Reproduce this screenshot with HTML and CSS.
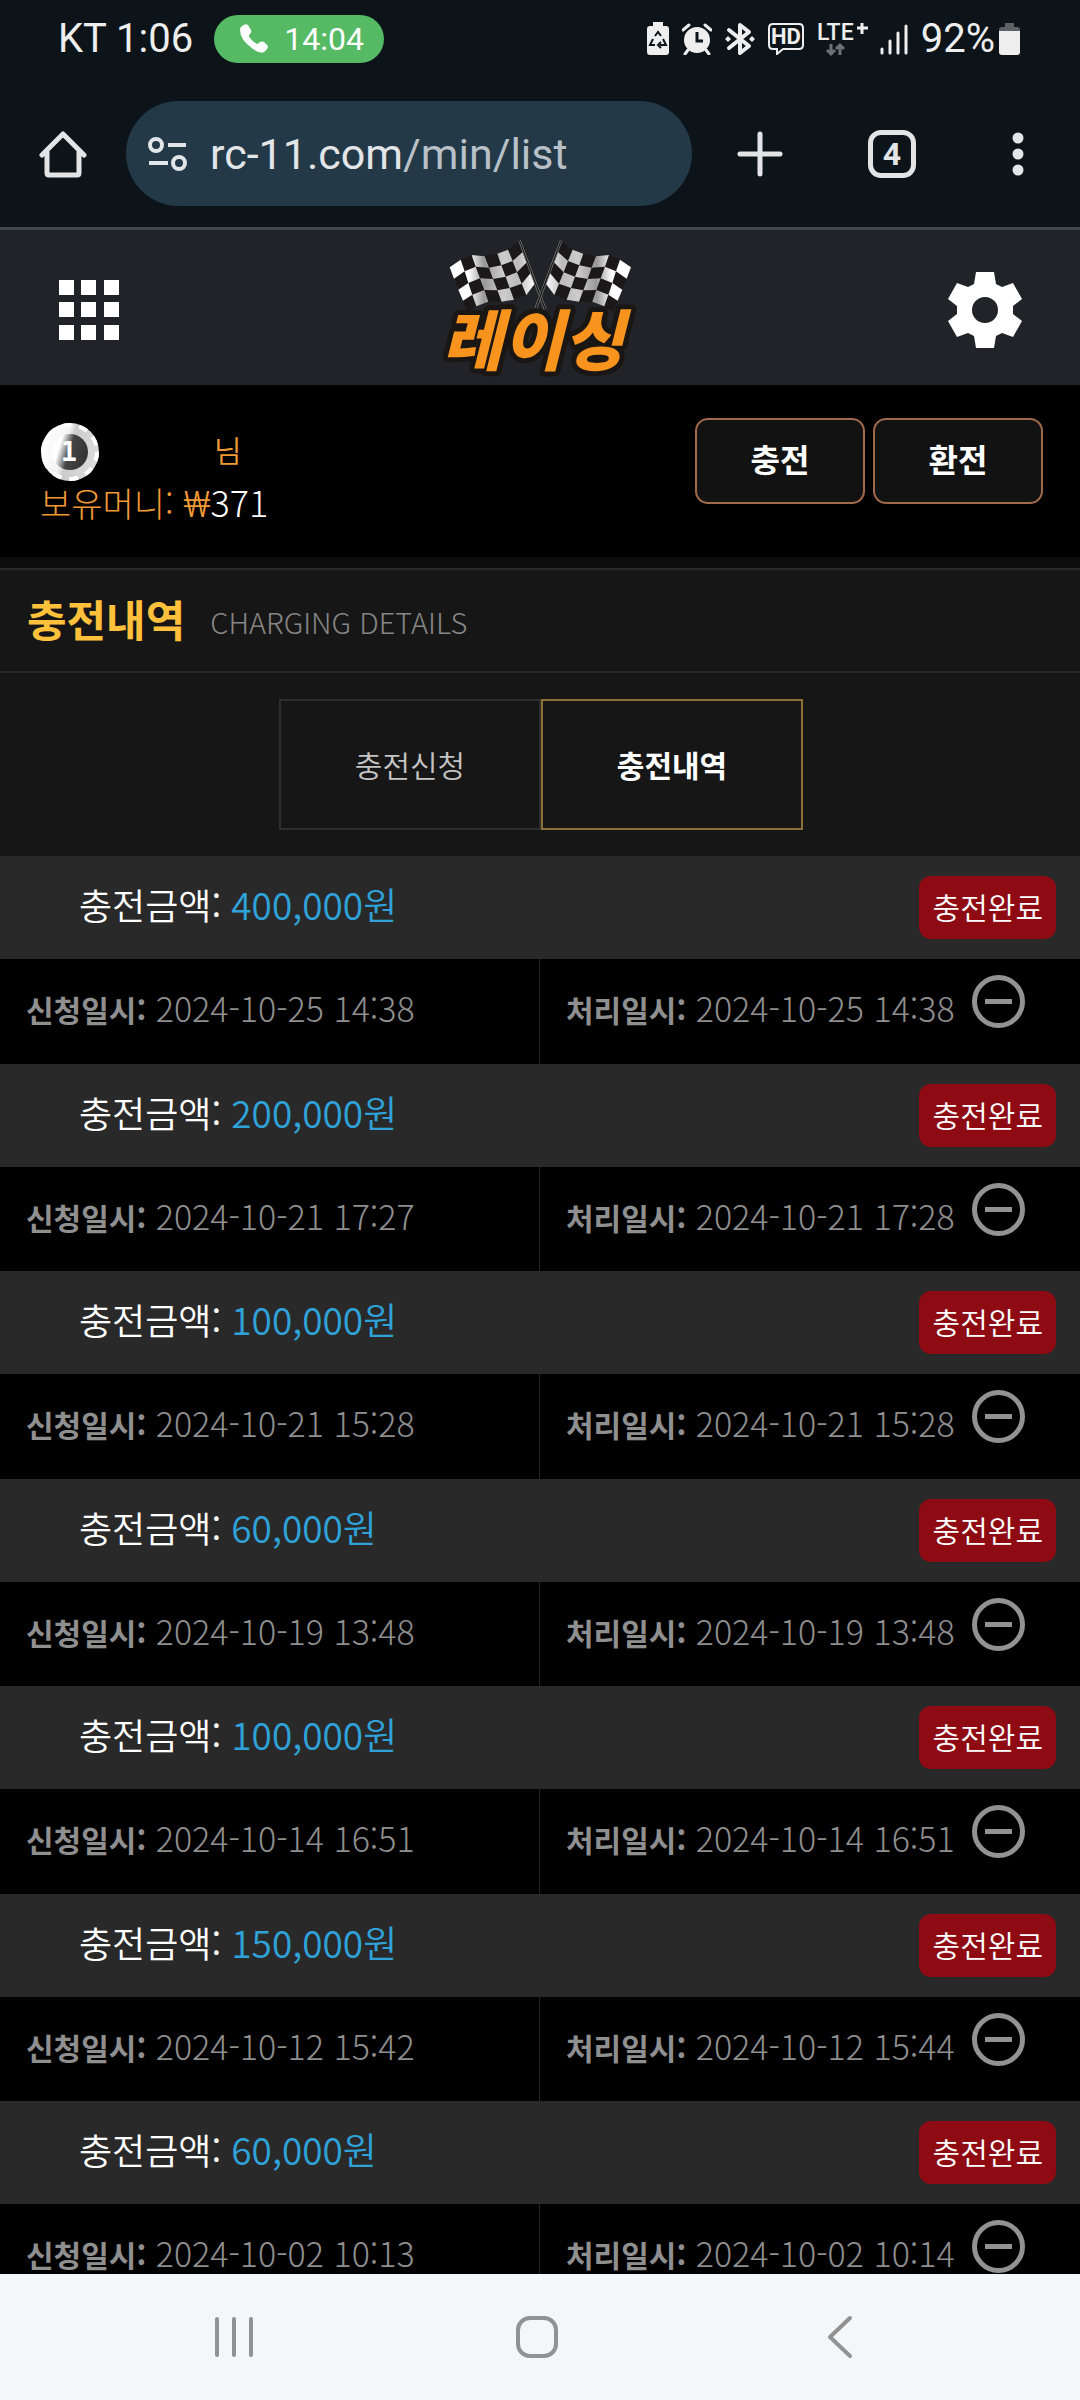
FILE: index.html
```html
<!DOCTYPE html>
<html lang="ko">
<head>
<meta charset="utf-8">
<meta name="viewport" content="width=device-width, initial-scale=1">
<title>충전내역</title>
<link rel="stylesheet" href="styles.css">
</head>
<body>
<div class="screen">
  <div class="status">
    <span class="status-clock">KT 1:06</span>
    <span class="call">
      <svg width="28" height="29" viewBox="0 0 28 29" fill="#fff"><path d="M1 3 Q5 -1 8 1 L11 6 Q12 8 10 10 Q8 12 10 14 Q13 18 17 20 Q18 20 20 18 Q22 17 24 18 L28 22 Q28 25 24 28 Q20 30 13 25 Q0 16 0 6 Q0 4 1 3Z"/></svg>
      14:04
    </span>
    <div class="status-icons">
      <svg width="22" height="34" viewBox="0 0 22 34"><path d="M6 0h10v4h3q3 0 3 3v23q0 3-3 3H3q-3 0-3-3V7q0-3 3-3h3z" fill="#eee"/><g fill="none" stroke="#0c141a" stroke-width="2"><path d="M8 14l3-4 3 4M6 17l-3 6h5M16 17l3 6h-6M14 20l-3 3 3 3"/></g></svg>
      <svg width="30" height="32" viewBox="0 0 30 32"><circle cx="15" cy="17" r="13" fill="#eee"/><path d="M1 7l6-5M29 7l-6-5M6 27l-3 4M24 27l3 4" stroke="#eee" stroke-width="3" stroke-linecap="round"/><path d="M15 9v9h6" fill="none" stroke="#0c141a" stroke-width="3"/></svg>
      <svg width="30" height="34" viewBox="0 0 30 34"><path d="M4 8l20 16-9 7V3l9 7L4 26" fill="none" stroke="#eee" stroke-width="4" stroke-linejoin="round" stroke-linecap="round"/><path d="M0 17l3-3 3 3-3 3zM24 17l3-3 3 3-3 3z" fill="#eee"/></svg>
      <svg width="36" height="32" viewBox="0 0 36 32"><path d="M5 1h26q4 0 4 4v17q0 4-4 4H15l-6 5v-5H5q-4 0-4-4V5q0-4 4-4z" fill="none" stroke="#eee" stroke-width="2"/><text x="18" y="21" text-anchor="middle" class="hd">HD</text></svg>
      <svg class="network" width="50" height="34" viewBox="0 0 50 34"><text x="0" y="18" class="lte">LTE</text><path d="M45 1v11M40 6h11" stroke="#eee" stroke-width="3"/><path d="M14 22v10M10 28l4 4 4-4M23 33V23M19 27l4-4 4 4" fill="none" stroke="#6d7175" stroke-width="3"/></svg>
      <svg width="28" height="32" viewBox="0 0 28 32"><path d="M2 26v4M10 18v12M18 10v20M26 3v27" stroke="#eee" stroke-width="3" stroke-linecap="round"/></svg>
      <span class="battery"><span>92%</span>
      <svg width="21" height="34" viewBox="0 0 21 34"><path d="M6 1h9v4h3q3 0 3 3v2H0V8q0-3 3-3h3z" fill="#5d6064"/><path d="M0 9h21v21q0 3-3 3H3q-3 0-3-3z" fill="#eee"/></svg></span>
    </div>
  </div>

  <div class="browser">
    <button class="tool" aria-label="홈"><svg width="48" height="48" viewBox="0 0 48 48"><path d="M3 25L24 4l21 21M8 22v21q0 2 2 2h28q2 0 2-2V22" fill="none" stroke="#e3e4e6" stroke-width="5" stroke-linecap="round" stroke-linejoin="round"/></svg></button>
    <button class="address">
      <svg width="40" height="34" viewBox="0 0 40 34"><g fill="none" stroke="#e3e6e9" stroke-width="4"><circle cx="8" cy="8" r="6"/><circle cx="31" cy="26" r="6"/><path d="M20 8h18M1 26h19"/></g></svg>
      <span class="url">rc-11.com<span class="url-path">/min/list</span></span>
    </button>
    <div class="tools">
      <button class="tool" aria-label="새 탭"><svg width="48" height="48" viewBox="0 0 48 48"><path d="M24 4v40M4 24h40" stroke="#e3e4e6" stroke-width="5" stroke-linecap="round"/></svg></button>
      <button class="tool" aria-label="탭 4개"><span class="tab-count">4</span></button>
      <button class="tool tool-menu" aria-label="메뉴"><svg width="12" height="48" viewBox="0 0 12 48" fill="#e3e4e6"><circle cx="6" cy="8" r="5.5"/><circle cx="6" cy="24" r="5.5"/><circle cx="6" cy="40" r="5.5"/></svg></button>
    </div>
  </div>

  <main class="page">
    <header class="site-head">
      <button class="tool" aria-label="전체 메뉴"><svg width="60" height="60" viewBox="0 0 60 60" fill="#fff"><path d="M0 0h15v15H0zM22 0h15v15H22zM45 0h15v15H45zM0 22h15v15H0zM22 22h15v15H22zM45 22h15v15H45zM0 45h15v15H0zM22 45h15v15H22zM45 45h15v15H45z"/></svg></button>
      <a href="#" class="logo" aria-label="레이싱">
        <svg class="logo-art" width="188" height="140" viewBox="0 0 188 140">
          <defs>
            <linearGradient id="cloth" gradientUnits="userSpaceOnUse" x1="152" y1="160" x2="409" y2="160">
              <stop offset="0" stop-color="#fff"/><stop offset=".22" stop-color="#fff"/><stop offset=".4" stop-color="#999"/><stop offset=".62" stop-color="#ccc"/><stop offset=".8" stop-color="#bbb"/><stop offset="1" stop-color="#fff"/>
            </linearGradient>
            <g id="flag">
              <path d="M152 143L185 120 218 106 257 110 295 102 327 90 360 64 409 190 382 226 345 240 308 246 268 246 232 260 205 277Z" fill="#1b1819"/>
              <path fill="url(#cloth)" d="M152 143L185 120 197 155 165 177ZM178 210L208 190 220 225 192 243ZM197 155L230 141 243 176 208 190ZM220 225L256 211 268 246 232 260ZM218 106L257 110 270 144 230 141ZM243 176L282 178 295 212 256 211ZM270 144L307 137 320 171 282 178ZM295 212L332 205 345 240 308 246ZM295 102L327 90 341 124 307 137ZM320 171L354 158 368 192 332 205ZM341 124L372 96 384 127 354 158ZM368 192L397 158 409 190 382 226Z"/>
              <path d="M362 62L440 270" stroke="#111" stroke-width="9"/>
              <path d="M359 63L436 271M364 61L442 269" stroke="#999" stroke-width="2"/>
            </g>
          </defs>
          <g transform="scale(.3333) translate(-144 -55)">
            <use href="#flag"/>
            <use href="#flag" transform="translate(848 0) scale(-1 1)"/>
          </g>
          <text x="86" y="127" text-anchor="middle" class="logo-text">레이싱</text>
        </svg>
      </a>
      <button class="tool" aria-label="설정"><svg width="76" height="76" viewBox="0 0 76 76"><path fill="#fff" fill-rule="evenodd" d="M29 0H47L49 12 55 15 66 11 75 27 66 34V42L75 49 66 65 55 61 49 64 47 76H29L27 64 21 61 10 65 1 49 10 42V34L1 27 10 11 21 15 27 12ZM38 25A13 13 0 1 0 38 51 13 13 0 1 0 38 25Z"/></svg></button>
    </header>

    <section class="account">
      <div>
        <div class="user">
          <svg width="60" height="60" viewBox="0 0 60 60">
            <defs><linearGradient id="face" x1="0" y1=".3" x2="1" y2=".6"><stop offset="0" stop-color="#fff"/><stop offset=".4" stop-color="#f4f4f4"/><stop offset=".5" stop-color="#ccc"/><stop offset="1" stop-color="#ddd"/></linearGradient>
            <linearGradient id="core" x1="0" y1=".3" x2="1" y2=".6"><stop offset=".2" stop-color="#fff"/><stop offset=".5" stop-color="#444"/><stop offset="1" stop-color="#333"/></linearGradient></defs>
            <circle cx="30" cy="30" r="29" fill="url(#face)"/><circle cx="30" cy="30" r="27" fill="none" stroke="#fff" stroke-width="4" stroke-dasharray="9 8"/>
            <circle cx="30" cy="30" r="18" fill="url(#core)"/><text x="29" y="39" text-anchor="middle" class="coin-num">1</text>
          </svg>
          <span>님</span>
        </div>
        <p class="money">보유머니: <span class="won">₩</span><span class="money-value">371</span></p>
      </div>
      <div class="account-actions">
        <button class="action">충전</button>
        <button class="action">환전</button>
      </div>
    </section>

    <div class="title">
      <h1>충전내역</h1>
      <span class="title-sub">CHARGING DETAILS</span>
    </div>

    <nav class="tabs">
      <a href="#" class="tab">충전신청</a>
      <a href="#" class="tab tab-on" aria-current="page">충전내역</a>
    </nav>

    <ul class="records">
      <li class="record">
        <div class="record-head"><p>충전금액: <span class="amount">400,000원</span></p><span class="badge">충전완료</span></div>
        <div class="record-body"><p><b>신청일시:</b> 2024-10-25 14:38</p><p><b>처리일시:</b> 2024-10-25 14:38</p><button class="remove" aria-label="삭제"></button></div>
      </li>
      <li class="record">
        <div class="record-head"><p>충전금액: <span class="amount">200,000원</span></p><span class="badge">충전완료</span></div>
        <div class="record-body"><p><b>신청일시:</b> 2024-10-21 17:27</p><p><b>처리일시:</b> 2024-10-21 17:28</p><button class="remove" aria-label="삭제"></button></div>
      </li>
      <li class="record">
        <div class="record-head"><p>충전금액: <span class="amount">100,000원</span></p><span class="badge">충전완료</span></div>
        <div class="record-body"><p><b>신청일시:</b> 2024-10-21 15:28</p><p><b>처리일시:</b> 2024-10-21 15:28</p><button class="remove" aria-label="삭제"></button></div>
      </li>
      <li class="record">
        <div class="record-head"><p>충전금액: <span class="amount">60,000원</span></p><span class="badge">충전완료</span></div>
        <div class="record-body"><p><b>신청일시:</b> 2024-10-19 13:48</p><p><b>처리일시:</b> 2024-10-19 13:48</p><button class="remove" aria-label="삭제"></button></div>
      </li>
      <li class="record">
        <div class="record-head"><p>충전금액: <span class="amount">100,000원</span></p><span class="badge">충전완료</span></div>
        <div class="record-body"><p><b>신청일시:</b> 2024-10-14 16:51</p><p><b>처리일시:</b> 2024-10-14 16:51</p><button class="remove" aria-label="삭제"></button></div>
      </li>
      <li class="record">
        <div class="record-head"><p>충전금액: <span class="amount">150,000원</span></p><span class="badge">충전완료</span></div>
        <div class="record-body"><p><b>신청일시:</b> 2024-10-12 15:42</p><p><b>처리일시:</b> 2024-10-12 15:44</p><button class="remove" aria-label="삭제"></button></div>
      </li>
      <li class="record">
        <div class="record-head"><p>충전금액: <span class="amount">60,000원</span></p><span class="badge">충전완료</span></div>
        <div class="record-body"><p><b>신청일시:</b> 2024-10-02 10:13</p><p><b>처리일시:</b> 2024-10-02 10:14</p><button class="remove" aria-label="삭제"></button></div>
      </li>
    </ul>
  </main>

  <nav class="system-nav">
    <button class="tool" aria-label="최근 앱"><svg width="44" height="44" viewBox="0 0 44 44"><path d="M5 4v36M22 4v36M39 4v36" stroke="#929292" stroke-width="4" stroke-linecap="round"/></svg></button>
    <button class="tool" aria-label="홈 화면"><svg width="44" height="44" viewBox="0 0 44 44"><rect x="3" y="3" width="38" height="38" rx="12" fill="none" stroke="#929292" stroke-width="4"/></svg></button>
    <button class="tool" aria-label="뒤로"><svg width="44" height="44" viewBox="0 0 44 44"><path d="M32 3L12 22l20 19" fill="none" stroke="#929292" stroke-width="4" stroke-linecap="round" stroke-linejoin="round"/></svg></button>
  </nav>
</div>
</body>
</html>
```
FILE: styles.css
```css
* { box-sizing: border-box; }

body {
  margin: 0;
  background: #000;
  color: #fff;
  font-family: "Noto Sans CJK KR", "Noto Sans", sans-serif;
}

p, h1, ul { margin: 0; padding: 0; }
ul { list-style: none; }
a { color: inherit; text-decoration: none; }
svg { display: block; flex: none; }

button {
  margin: 0;
  padding: 0;
  border: 0;
  background: none;
  color: inherit;
  font: inherit;
}

.screen {
  display: flex;
  flex-direction: column;
  height: 100vh;
  overflow: hidden;
}

/* phone status bar */
.status {
  display: flex;
  align-items: center;
  flex: none;
  height: 77px;
  padding: 0 60px 0 58px;
  background: #0c141a;
  color: #eee;
  font-family: Roboto, sans-serif;
  font-size: 40px;
  line-height: 48px;
}
.call {
  display: flex;
  align-items: center;
  gap: 16px;
  height: 48px;
  margin-left: 21px;
  padding: 0 20px 0 26px;
  border-radius: 24px;
  background: #56ba65;
  color: #fff;
  font-size: 32px;
}
.status-icons {
  display: flex;
  align-items: center;
  gap: 13px;
  margin-left: auto;
}
.network { overflow: visible; }
.battery { display: flex; align-items: center; gap: 4px; }
.hd { font: 700 22px Roboto, sans-serif; fill: #eee; }
.lte { font: 500 23px Roboto, sans-serif; fill: #eee; }

/* browser toolbar */
.browser {
  display: flex;
  align-items: center;
  flex: none;
  height: 153px;
  padding: 3px 56px 0 39px;
  border-bottom: 3px solid #41484e;
  background: #0c141a;
}
.tool { display: grid; place-items: center; flex: none; }
.address {
  display: flex;
  align-items: center;
  flex: 1;
  gap: 22px;
  height: 105px;
  margin-left: 39px;
  padding-left: 22px;
  border-radius: 53px;
  background: #233947;
  color: #e3e6e9;
}
.url { font-family: Roboto, sans-serif; font-size: 43px; line-height: 56px; }
.url-path { color: #b9c1c8; }
.tools { display: flex; gap: 84px; margin-left: 44px; }
.tab-count {
  width: 48px;
  height: 48px;
  border: 5px solid #e3e4e6;
  border-radius: 13px;
  color: #e3e4e6;
  font: 700 32px/38px Roboto, sans-serif;
  text-align: center;
}
.tool-menu { margin-left: 12px; }

/* site */
.page { flex: 1; min-height: 0; overflow: hidden; }

.site-head {
  display: flex;
  align-items: center;
  justify-content: space-between;
  height: 155px;
  padding: 5px 57px 0 59px;
  background: #222328;
}
.logo { margin: -5px 0 0 16px; }
.logo-art { overflow: visible; }
.logo-text {
  font: italic 900 66px/72px "Noto Sans CJK KR", sans-serif;
  fill: #f8941d;
  stroke: #1a1614;
  stroke-width: 10px;
  stroke-linejoin: round;
  paint-order: stroke;
}

.account {
  display: flex;
  justify-content: space-between;
  height: 172px;
  padding: 33px 37px 0 40px;
  background: #000;
}
.user {
  display: flex;
  gap: 114px;
  height: 60px;
  margin-top: 4px;
  color: #f09a34;
  font-size: 30px;
  line-height: 54px;
  font-weight: 350;
}
.money { color: #f09a34; font-size: 34px; line-height: 38px; font-weight: 300; }
.won { font-family: Roboto, sans-serif; font-size: 36px; }
.money-value { color: #fff; font-size: 36px; }
.coin-num { font: 700 27px "DejaVu Sans Mono", monospace; fill: #fff; }
.account-actions { display: flex; gap: 8px; }
.action {
  width: 170px;
  height: 86px;
  padding-bottom: 6px;
  border: 2px solid #a0694b;
  border-radius: 13px;
  background: #121212;
  font-size: 32px;
  font-weight: 700;
}

.title {
  display: flex;
  align-items: center;
  gap: 25px;
  height: 116px;
  padding: 0 27px 4px;
  border-top: 11px solid #0c0c0c;
  border-bottom: 2px solid #282828;
  background: #161616;
  box-shadow: inset 0 2px #282828;
}
.title h1 { color: #ffc13b; font-size: 43px; line-height: 56px; font-weight: 700; }
.title-sub { padding-top: 6px; color: #868686; font-size: 29px; line-height: 44px; font-weight: 300; }

.tabs {
  display: flex;
  justify-content: center;
  padding: 26px 0 26px 2px;
  background: #161616;
}
.tab {
  width: 262px;
  height: 131px;
  border: 2px solid #2e2e2e;
  color: #c4c4c4;
  font-size: 30px;
  line-height: 127px;
  font-weight: 350;
  text-align: center;
}
.tab-on { border-color: #8b6f37; color: #fff; font-weight: 700; }

.record-head {
  display: flex;
  align-items: center;
  justify-content: space-between;
  height: 103px;
  padding: 0 24px 0 79px;
  background: #292929;
  font-size: 36px;
  line-height: 52px;
  font-weight: 350;
}
.record-head p { padding-bottom: 8px; }
.amount { color: #2fa3d9; font-size: 37px; }
.badge {
  padding: 0 13px 2px 14px;
  border-radius: 12px;
  background: #8f0b14;
  font-size: 30px;
  line-height: 61px;
}
.record-body {
  display: grid;
  grid-template-columns: 1fr 1fr;
  height: 104px;
  background: #000;
  color: #8f8f8f;
  font-size: 34px;
  line-height: 98px;
  font-weight: 300;
  position: relative;
}
.record:nth-child(odd) .record-body { height: 105px; }
.record-body p { padding-left: 26px; white-space: nowrap; }
.record-body p:first-child { border-right: 1px solid #242424; }
.record-body b { font-size: 30px; font-weight: 700; }
.remove {
  position: absolute;
  top: 16px;
  right: 55px;
  display: grid;
  place-items: center;
  width: 53px;
  height: 53px;
  border: 5px solid #929292;
  border-radius: 50%;
}
.remove::before { content: ""; width: 27px; height: 5px; background: #929292; }

/* phone navigation keys */
.system-nav {
  display: flex;
  align-items: center;
  justify-content: space-around;
  flex: none;
  height: 126px;
  padding: 0 88px 0 82px;
  background: #f3f7fa;
}
```
